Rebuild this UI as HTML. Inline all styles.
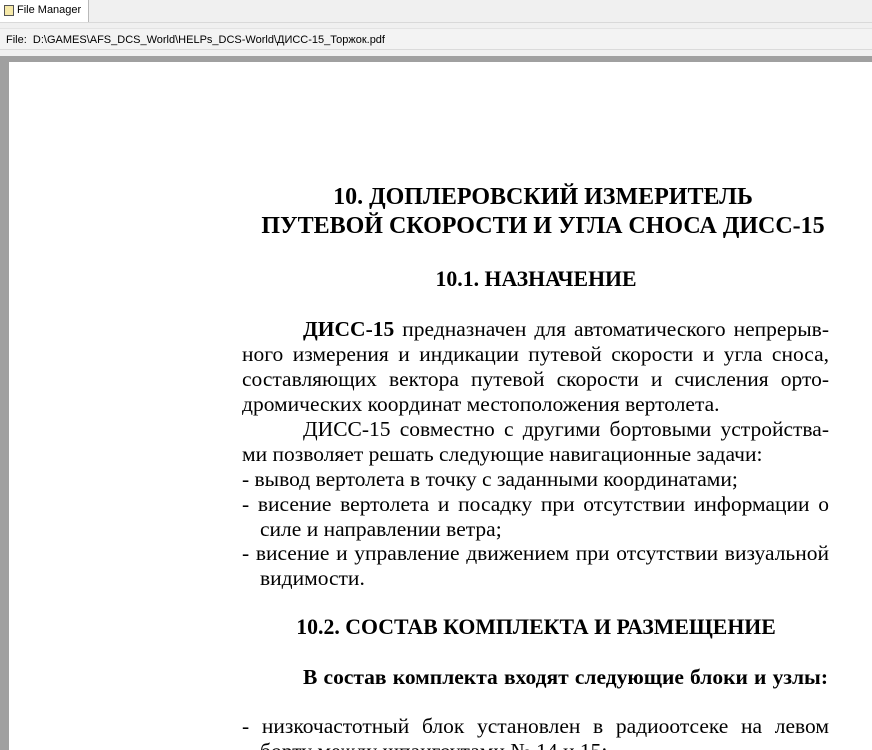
<!DOCTYPE html>
<html><head><meta charset="utf-8"><style>
html,body{margin:0;width:872px;height:750px;overflow:hidden}
body{background:#f0f0f0;position:relative;font-family:"Liberation Sans",sans-serif}
#w{position:absolute;left:0;top:0;width:872px;height:750px;overflow:hidden}
.tab{position:absolute;left:0;top:0;width:88px;height:22px;background:#fff;border-right:1px solid #b9b9b9;font-size:11px;line-height:20px}
.tab i{position:absolute;left:4px;top:5px;width:8px;height:9px;border:1px solid #555;background:#f6e9a8}
.tab span{position:absolute;left:17px;top:0}
.bar{position:absolute;left:0;top:22px;width:872px;height:1px;background:#d9d9d9}
.file{position:absolute;left:0;top:28px;width:872px;height:22px;background:#f3f3f3;border-top:1px solid #e3e3e3;border-bottom:1px solid #dadada;font-size:11px;line-height:22px;padding-left:6px;box-sizing:border-box}
.frame{position:absolute;left:0;top:56px;width:872px;height:694px;background:#a0a0a0}
.page{position:absolute;left:9px;top:62px;width:863px;height:688px;background:#fff}
.t{position:absolute;font-family:"Liberation Serif",serif;font-size:21.5px;line-height:24px;color:#000;white-space:nowrap}
.j{text-align:justify;text-align-last:justify;white-space:normal}
.h{font-weight:bold;font-size:24px;text-align:center}
.h2{font-weight:bold;font-size:21.8px;text-align:center}
.b{font-weight:bold}
</style></head><body><div id="w">
<div class="tab"><i></i><span>File Manager</span></div>
<div class="bar"></div>
<div class="file">File:&nbsp; D:\GAMES\AFS_DCS_World\HELPs_DCS-World\ДИСС-15_Торжок.pdf</div>
<div class="frame"></div>
<div class="page"></div>
<div class="t h" style="left:243px;width:600px;top:185px">10. ДОПЛЕРОВСКИЙ ИЗМЕРИТЕЛЬ</div>
<div class="t h" style="left:243px;width:600px;top:214px">ПУТЕВОЙ СКОРОСТИ И УГЛА СНОСА ДИСС-15</div>
<div class="t h2" style="left:236px;width:600px;top:267px">10.1. НАЗНАЧЕНИЕ</div>
<div class="t j" style="left:303px;width:526px;top:317px"><b>ДИСС-15</b> предназначен для автоматического непрерыв-</div>
<div class="t j" style="left:242px;width:587px;top:342px">ного измерения и индикации путевой скорости и угла сноса,</div>
<div class="t j" style="left:242px;width:587px;top:367px">составляющих вектора путевой скорости и счисления орто-</div>
<div class="t" style="left:242px;top:392px">дромических координат местоположения вертолета.</div>
<div class="t j" style="left:303px;width:526px;top:417px">ДИСС-15 совместно с другими бортовыми устройства-</div>
<div class="t" style="left:242px;top:442px">ми позволяет решать следующие навигационные задачи:</div>
<div class="t" style="left:242px;top:467px">- вывод вертолета в точку с заданными координатами;</div>
<div class="t j" style="left:242px;width:587px;top:492px">- висение вертолета и посадку при отсутствии информации о</div>
<div class="t" style="left:260px;top:517px">силе и направлении ветра;</div>
<div class="t j" style="left:242px;width:587px;top:541px">- висение и управление движением при отсутствии визуальной</div>
<div class="t" style="left:260px;top:566px">видимости.</div>
<div class="t h2" style="left:236px;width:600px;top:615px">10.2. СОСТАВ КОМПЛЕКТА И РАЗМЕЩЕНИЕ</div>
<div class="t j b" style="left:303px;width:525px;top:665px">В состав комплекта входят следующие блоки и узлы:</div>
<div class="t j" style="left:242px;width:587px;top:714px">- низкочастотный блок установлен в радиоотсеке на левом</div>
<div class="t" style="left:260px;top:739px">борту между шпангоутами № 14 и 15;</div>
</div></body></html>
